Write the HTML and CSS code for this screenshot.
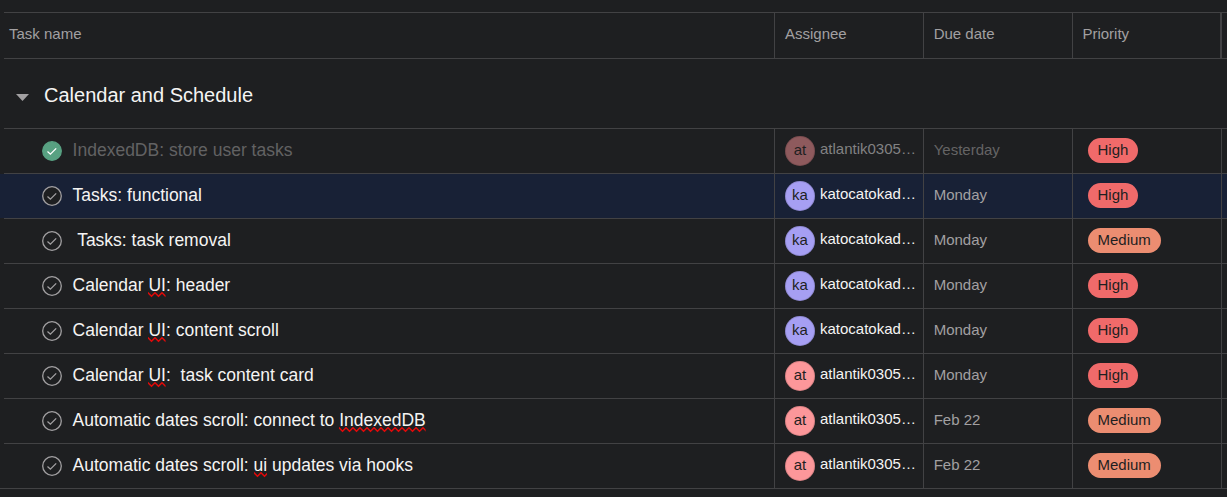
FILE: index.html
```html
<!DOCTYPE html>
<html lang="en">
<head>
<meta charset="utf-8">
<title>Tasks</title>
<link rel="stylesheet" href="styles.css">
</head>
<body>
<svg class="defs" width="0" height="0" aria-hidden="true">
  <defs>
    <pattern id="wave" width="7" height="6" patternUnits="userSpaceOnUse"><path d="M-1.5 -.7 0 .8 3.5 4.3 7 .8 8.5 -.7" fill="none" stroke="#e40808" stroke-width="1.5"/></pattern>
  </defs>
</svg>
<main class="table">
  <header class="row head">
    <div class="cell">Task name</div><div class="cell">Assignee</div><div class="cell due">Due date</div><div class="cell priority">Priority</div><div class="cell"></div>
  </header>
  <h2 class="section"><svg class="caret" width="13" height="7" viewBox="0 0 13 7"><path d="M0 0h13L6.5 7z"/></svg><span>Calendar and Schedule</span></h2>
  <div id="rows"></div>
</main>
<script src="rows.js"></script>
</body>
</html>
```
FILE: styles.css
```css
body { margin: 0; height: 497px; overflow: hidden; background: #1e1f21; color: #f5f4f3; font-family: "Liberation Sans", Arial, sans-serif; font-size: 15px; }
.defs { display: block; height: 0; }
.table { padding-top: 12px; }
.row { display: grid; grid-template-columns: 770px 149px 149px 149px 1fr; height: 44px; padding-left: 4px; position: relative; border-bottom: 1px solid transparent; }
.row::after { content: ""; position: absolute; left: 4px; right: 0; bottom: -1px; height: 1px; background: #424244; }
.row:last-child::after { left: 0; }
.cell { display: flex; align-items: center; min-width: 0; box-sizing: border-box; padding-left: 10px; border-left: 1px solid #424244; color: #a2a0a2; white-space: pre; }
.cell:first-child { border-left: 0; }
.cell.due { padding-left: 9.7px; }
.cell.priority { padding-left: 9.4px; }
.head { height: 45px; border-top: 1px solid transparent; }
.head::before { content: ""; position: absolute; left: 4px; right: 0; top: -1px; height: 1px; background: #424244; }
.head .cell { padding-bottom: 4px; }
.head .cell:first-child { padding-left: 5px; }
.head .cell:last-child { border-left-width: 2px; margin-left: -1px; }
.section { display: flex; align-items: center; box-sizing: border-box; height: 70px; margin: 0 0 0 4px; padding-left: 12px; gap: 15px; border-bottom: 1px solid #424244; font-size: 20px; font-weight: 400; }
.section span { padding-top: 4px; }
.caret { fill: #a2a0a2; margin-top: 8px; }
.selected { background: #182136; background-clip: padding-box; }
.name.cell { padding-left: 38px; font-size: 17.5px; color: #f5f4f3; gap: 10.6px; }
.title { padding-bottom: 2px; }
.check { width: 20px; height: 20px; fill: #1e1f21; stroke: #a2a0a2; stroke-width: 1.3; flex: none; }
.who { gap: 5px; }
.who.cell { color: #f5f4f3; }
.avatar { display: flex; align-items: center; justify-content: center; box-sizing: border-box; width: 30px; height: 30px; padding-bottom: 3px; border-radius: 50%; color: #1e1f21; box-shadow: inset 0 0 0 1px rgba(0,0,0,.13); }
.ka { background: #a69ff3; }
.at { background: #fc979a; }
.user { padding-bottom: 5px; }
.date { padding-bottom: 4px; }
.pill { display: flex; align-items: center; height: 25px; box-sizing: border-box; margin: 0 0 1px 5px; padding: 0 9.5px 2px; border-radius: 13px; color: #1e1f21; }
.high { background: #f06a6a; }
.medium { min-width: 73px; background: #ec8d71; }
.done .title { color: #626263; }
.done .user { color: #828283; }
.done .date { color: #656465; }
.done .avatar { background: #8e5a5d; }
.done .check { fill: #58a182; stroke: #58a182; }
.done .check path { stroke: #fff; }
.misspelled { position: relative; }
.misspelled svg { position: absolute; left: 0; top: 17px; width: 100%; height: 6px; }
```
FILE: rows.js
```javascript
const tasks = [
  ["IndexedDB: store user tasks", "at", "Yesterday", "High", "done"],
  ["Tasks: functional", "ka", "Monday", "High", "selected"],
  [" Tasks: task removal", "ka", "Monday", "Medium", ""],
  ["Calendar [UI]: header", "ka", "Monday", "High", ""],
  ["Calendar [UI]: content scroll", "ka", "Monday", "High", ""],
  ["Calendar [UI]:  task content card", "at", "Monday", "High", ""],
  ["Automatic dates scroll: connect to [IndexedDB]", "at", "Feb 22", "Medium", ""],
  ["Automatic dates scroll: [ui] updates via hooks", "at", "Feb 22", "Medium", ""]
];
const users = { at: "atlantik0305…", ka: "katocatokad…" };
const wave = '<svg><rect width="100%" height="6" fill="url(#wave)"/></svg>';
document.getElementById("rows").innerHTML = tasks.map(([title, user, date, priority, state]) => `
  <div class="row ${state}"><div class="cell name"><svg class="check" viewBox="0 0 20 20"><circle cx="10" cy="10" r="9.3"/><path fill="none" d="M5.5 10.5 8.4 13.2 14.2 7.4"/></svg><span class="title">${title.replace(/\[(.+?)\]/, `<span class="misspelled">$1${wave}</span>`)}</span></div><div class="cell who"><span class="avatar ${user}">${user}</span><span class="user">${users[user]}</span></div><div class="cell due"><span class="date">${date}</span></div><div class="cell"><span class="pill ${priority.toLowerCase()}">${priority}</span></div><div class="cell"></div></div>`).join("");
```
